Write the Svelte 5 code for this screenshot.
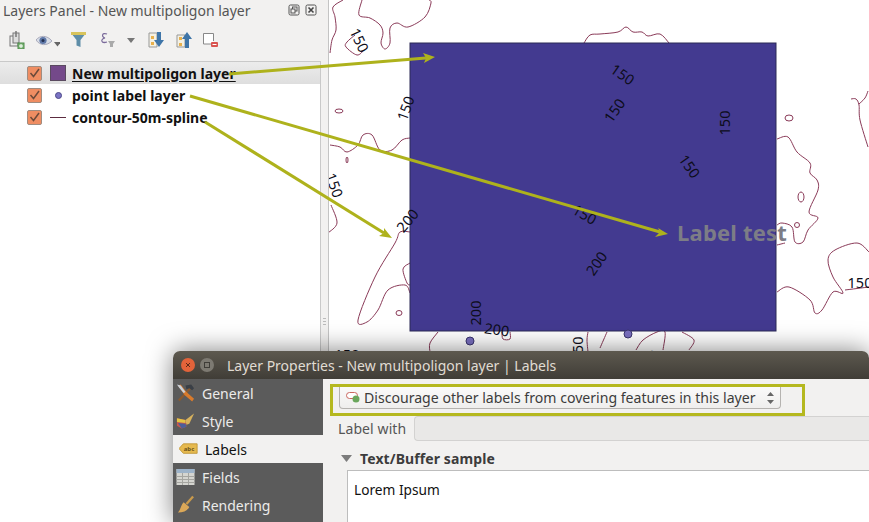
<script>
  // smooth line through the points (catmull-rom)
  function smooth(p) {
    let d = `M${p[0][0]} ${p[0][1]}`;
    for (let i = 0; i < p.length - 1; i++) {
      const a = p[i - 1] || p[i];
      const b = p[i];
      const c = p[i + 1];
      const e = p[i + 2] || c;
      d += `C${b[0] + (c[0] - a[0]) / 6} ${b[1] + (c[1] - a[1]) / 6} ${c[0] - (e[0] - b[0]) / 6} ${c[1] - (e[1] - b[1]) / 6} ${c[0]} ${c[1]}`;
    }
    return d;
  }

  const contours = [
    [[362,0],[359,15],[370,18],[380,25],[383,33],[381,43],[385,49],[390,43],[390,28],[397,23],[408,27],[425,17],[431,3],[429,0]],
    [[343,0],[333,7],[335,17],[336,30],[332,40],[330,53]],
    [[355,35],[347,42],[346,47],[357,55],[364,50]],
    [[330,145],[340,147],[347,152],[358,145],[363,135],[372,135],[380,150],[392,150],[402,140],[410,138]],
    [[584,43],[590,35],[600,34],[618,32],[626,27],[633,32],[642,32],[648,36],[660,34],[669,43]],
    [[777,139],[788,137],[797,152],[810,163],[810,173],[817,180],[818,190],[809,212],[818,218],[808,230],[803,242],[795,242],[792,227],[782,223],[777,225]],
    [[777,245],[785,243]],
    [[851,99],[856,99],[859,105],[860,120],[868,147]],
    [[859,104],[865,98],[868,91]],
    [[777,292],[789,287],[810,300],[815,313],[822,310],[833,292],[843,293],[833,277],[828,260],[835,250],[857,243],[869,252]],
    [[845,290],[869,287]],
    [[600,348],[607,332]],
    [[636,350],[643,340],[657,332],[665,332],[663,350]],
    [[682,332],[694,340],[689,350]],
    [[331,205],[337,223],[328,233]],
    [[410,232],[400,232],[395,243],[375,277],[358,320],[367,322],[378,310],[388,290],[405,285],[410,293]],
    [[410,263],[403,269],[407,283],[410,285]],
    [[438,332],[430,343],[430,352]],
    [[502,332],[503,339],[510,339],[510,332]],
    [[588,332],[587,340],[588,352]]
  ];

  const rings = [
    [339, 111, 4, 2], [347, 160, 1, 3], [789, 118, 4, 3], [801, 197, 3, 5], [797, 225, 2.5, 2.5], [399, 313, 3, 2.5]
  ];

  const labels = [
    ["150", 360, 40, 65], ["150", 405, 108, -70], ["150", 623, 74, 35], ["150", 614, 110, -55],
    ["150", 724, 123, -90], ["150", 690, 166, 55], ["150", 585, 214, 30], ["200", 596, 263, -55],
    ["200", 407, 220, -50], ["200", 475, 313, -90], ["200", 497, 329, 8], ["150", 335, 185, 70],
    ["150", 860, 282, 0], ["150", 577, 349, -90], ["200", 650, 362, -70], ["150", 347, 354, 0]
  ];

  const layers = [
    { name: "New multipoligon layer", kind: "fill", active: true },
    { name: "point label layer", kind: "point" },
    { name: "contour-50m-spline", kind: "line" }
  ];

  const menu = ["General", "Style", "Labels", "Fields", "Rendering"];
</script>

<div class="app">
  <aside class="panel">
    <header class="panel-title">
      <span>Layers Panel - New multipoligon layer</span>
      <div class="dock-btns">
        <svg width="12" height="12" viewBox="0 0 12 12"><rect x="1" y="1" width="10" height="10" rx="1.5" fill="none" stroke="#555"/><rect x="4.5" y="3" width="4.5" height="4" fill="none" stroke="#555"/><rect x="3" y="5" width="4" height="4" fill="#f2f1f0" stroke="#555"/></svg>
        <svg width="12" height="12" viewBox="0 0 12 12"><rect x="1" y="1" width="10" height="10" rx="1.5" fill="none" stroke="#555"/><path d="M3.5 3.5l5 5M8.5 3.5l-5 5" stroke="#444" stroke-width="1.6"/></svg>
      </div>
    </header>

    <div class="toolbar">
      <svg class="t1" width="16" height="18" viewBox="0 0 16 18"><rect x="1" y="5" width="8" height="10" fill="#eee" stroke="#777"/><rect x="4" y="2" width="6" height="10" fill="#ddd" stroke="#777"/><path d="M7 0v6" stroke="#777" stroke-width="1.5"/><rect x="9" y="12" width="6" height="6" fill="#7fb878" stroke="#4c8a4a"/><path d="M12 13v4M10 15h4" stroke="#fff"/></svg>
      <svg class="t2" width="24" height="14" viewBox="0 0 24 14"><path d="M0 6C4 1 11 1 16 7C11 12 4 12 0 6Z" fill="#d8dde6" stroke="#aab"/><circle cx="7" cy="6.5" r="3.6" fill="#5f78a8"/><circle cx="7" cy="6.5" r="1.5" fill="#23304f"/><path d="M18 8h7l-3.5 4.5z" fill="#666"/></svg>
      <svg class="t3" width="15" height="16" viewBox="0 0 15 16"><path d="M0 1h15L9.5 8v7l-4-1.5V8z" fill="#5f8ea8"/><rect width="15" height="3" fill="#d8c45c"/></svg>
      <svg class="t4" width="16" height="16" viewBox="0 0 16 16"><path d="M7 2C2 0 1 5 5 6C0 7 1 12 7 10" fill="none" stroke="#7a6a9a" stroke-width="1.2"/><path d="M8 9h7l-2 3v3h-3v-3z" fill="#aaa"/></svg>
      <svg class="t5" width="8" height="5" viewBox="0 0 8 5"><path d="M0 0h8L4 5z" fill="#777"/></svg>
      <svg class="t6" width="16" height="16" viewBox="0 0 16 16"><path d="M1 1h8v14H1z" fill="#f4f1e4" stroke="#999"/><rect x="3" y="4" width="3" height="3" fill="#e8b04c"/><rect x="3" y="10" width="3" height="3" fill="#e8b04c"/><path d="M9 0h4v8h3l-5 7-5-7h3z" fill="#3f75a8"/></svg>
      <svg class="t7" width="16" height="16" viewBox="0 0 16 16"><path d="M1 3h8v12H1z" fill="#f4f1e4" stroke="#999"/><rect x="3" y="5" width="3" height="3" fill="#e8b04c"/><rect x="3" y="11" width="3" height="3" fill="#e8b04c"/><path d="M9 16h4V7h3L11 0 6 7h3z" fill="#3f75a8"/></svg>
      <svg class="t8" width="15" height="14" viewBox="0 0 15 14"><path d="M8 11H.5V.5h10V8" fill="#fff" stroke="#888"/><rect x="8" y="9" width="7" height="5" rx="1" fill="#d9534f"/><path d="M9.5 11.5h4" stroke="#fff"/></svg>
    </div>

    <div class="tree">
      {#each layers as layer}
        <div class="row" class:active={layer.active}>
          <span class="check">
            <svg width="13" height="13" viewBox="0 0 13 13"><path d="M2.500 6l3 3.500 5.500-7.500" fill="none" stroke="#6b4a3a" stroke-width="1.5"/></svg>
          </span>
          <span class="sym">
            {#if layer.kind === "fill"}
              <i class="swatch"></i>
            {:else if layer.kind === "point"}
              <i class="dot"></i>
            {:else}
              <i class="dash"></i>
            {/if}
          </span>
          <span class="name">{layer.name}</span>
        </div>
      {/each}
    </div>
    <div class="grip"></div>
  </aside>

  <section class="map">
    <svg width="540" height="522" viewBox="329 0 540 522">
      {#each contours as c}
        <path d={smooth(c)} fill="none" stroke="#8a3a58" stroke-width="1"/>
      {/each}
      {#each rings as r}
        <ellipse cx={r[0]} cy={r[1]} rx={r[2]} ry={r[3]} fill="none" stroke="#8a3a58"/>
      {/each}
      <rect x="410" y="43" width="366" height="288" fill="#433a90" stroke="#2d2a57"/>
      <circle cx="470" cy="341" r="4" fill="#7a70c0" stroke="#3a3570"/>
      <circle cx="628" cy="334" r="4" fill="#7a70c0" stroke="#3a3570"/>
      {#each labels as l}
        <text class="lbl" text-anchor="middle" dominant-baseline="central" transform="translate({l[1]} {l[2]}) rotate({l[3]})">{l[0]}</text>
      {/each}
      <text class="test" x="677" y="241">Label test</text>
    </svg>
  </section>

  <svg class="arrows" width="869" height="522" viewBox="0 0 869 522">
    <g stroke="#aeb21c" stroke-width="3" fill="none">
      <path d="M229 74L426 58"/>
      <path d="M190 96L660 232"/>
      <path d="M205 122L384 233"/>
    </g>
    <g fill="#aeb21c">
      <path d="M435 57L423 53L426 58L424 63Z"/>
      <path d="M668 234L658 228L660 232L655 237Z"/>
      <path d="M392 238L384 228L384 233L379 236Z"/>
    </g>
  </svg>

  <div class="dialog">
    <header class="titlebar">
      <span class="wbtn close"><svg width="6" height="6" viewBox="0 0 6 6"><path d="M1 1l4 4M5 1l-4 4" stroke="#5b2a18" stroke-width="1"/></svg></span>
      <span class="wbtn min"><i></i></span>
      <span class="wtitle">Layer Properties - New multipoligon layer | Labels</span>
    </header>
    <div class="dbody">
      <nav class="side">
        {#each menu as m}
          <div class="item" class:sel={m === "Labels"}>
            {#if m === "General"}
              <svg width="20" height="20" viewBox="0 0 20 20"><path d="M3 18L15 5" stroke="#8a5a30" stroke-width="2.4"/><path d="M10 2l6-1 3 4-2 2-3-2-3 1z" fill="#3a3f46"/><path d="M2 2l3-1 6 8 8 7-2 3-8-7z" fill="#d97b2c"/><path d="M1 1l4 1 5 7-2 1-5-6z" fill="#c9d2dc"/></svg>
            {:else if m === "Style"}
              <svg width="20" height="20" viewBox="0 0 20 20"><path d="M1 7l9 2 1 7-5 2-5-3z" fill="#c9574c"/><path d="M1 7l9 2 0 3-9-1z" fill="#e2c544"/><path d="M2 12l8 1 1 3-5 2z" fill="#4c5f9a"/><path d="M10 9l9-7-5 11-3 1z" fill="#d8b25c"/></svg>
            {:else if m === "Labels"}
              <svg width="22" height="14" viewBox="0 0 22 14"><path d="M5 1h16v11H5L0 6.500z" fill="#e6b94e" stroke="#bf9434"/><text x="5.500" y="9.500" class="abc">abc</text></svg>
            {:else if m === "Fields"}
              <svg width="18" height="16" viewBox="0 0 18 16"><rect width="18" height="16" fill="#d5d5d0"/><rect width="18" height="4" fill="#9db3c9"/><path d="M0 7.500h18M0 10.500h18M0 13.500h18M6 4v12M12 4v12" stroke="#a5a5a0"/></svg>
            {:else}
              <svg width="20" height="20" viewBox="0 0 20 20"><path d="M11 9l7-8" stroke="#c99a4c" stroke-width="2.4"/><path d="M8 7l6 5c-2 4-6 6-12 6 3-3 3-8 6-11z" fill="#dba858"/></svg>
            {/if}
            <span>{m}</span>
          </div>
        {/each}
      </nav>
      <div class="content">
        <div class="mode-row">
          <div class="combo">
            <svg width="14" height="11" viewBox="0 0 14 11"><rect x=".5" y=".5" width="11" height="6" rx="3" fill="#fff" stroke="#c9675f"/><circle cx="10" cy="7" r="3.500" fill="#6aa65c"/></svg>
            <span class="combo-text">Discourage other labels from covering features in this layer</span>
            <svg class="updown" width="7" height="12" viewBox="0 0 7 12"><path d="M0 4L3.500 0L7 4zM0 8h7L3.500 12z" fill="#666"/></svg>
          </div>
        </div>
        <div class="label-with">
          <span>Label with</span>
          <div class="field"></div>
        </div>
        <div class="sample-head">
          <svg width="11" height="7" viewBox="0 0 11 7"><path d="M0 0h11L5.500 7z" fill="#7c7c7c"/></svg>
          <b>Text/Buffer sample</b>
        </div>
        <div class="sample">Lorem Ipsum</div>
      </div>
    </div>
  </div>
</div>

<style>
  :global(body) {
    margin: 0;
    background: #fff;
  }
  .app {
    position: relative;
    display: flex;
    width: 869px;
    height: 522px;
    overflow: hidden;
    font-family: "Noto Sans", "Open Sans", sans-serif;
  }

  .panel {
    position: relative;
    flex: 0 0 329px;
    display: flex;
    flex-direction: column;
    box-sizing: border-box;
    background: #f2f1f0;
    border-right: 1px solid #c4c4c4;
  }
  .panel-title {
    display: flex;
    justify-content: space-between;
    align-items: center;
    box-sizing: border-box;
    height: 22px;
    padding: 0 11px 2px 3px;
    font-size: 14px;
    color: #555;
  }
  .dock-btns {
    display: flex;
    gap: 5px;
  }
  .toolbar {
    position: relative;
    height: 39px;
  }
  .toolbar svg {
    position: absolute;
  }
  .t1 { left: 9px; top: 9px; }
  .t2 { left: 36px; top: 12px; }
  .t3 { left: 71px; top: 10px; }
  .t4 { left: 100px; top: 10px; }
  .t5 { left: 127px; top: 16px; }
  .t6 { left: 148px; top: 10px; }
  .t7 { left: 176px; top: 10px; }
  .t8 { left: 203px; top: 11px; }

  .tree {
    flex: 1;
    width: 321px;
    box-sizing: border-box;
    background: #fff;
    border-top: 1px solid #c9c9c9;
    border-right: 1px solid #c9c9c9;
  }
  .row {
    display: flex;
    align-items: center;
    height: 22px;
    padding-left: 27px;
  }
  .row.active {
    background: linear-gradient(#ececec, #dedede);
  }
  .check {
    display: block;
    width: 15px;
    height: 15px;
    box-sizing: border-box;
    background: #ef8d62;
    border: 1px solid #a08c80;
    border-radius: 2px;
    overflow: hidden;
  }
  .check svg {
    display: block;
  }
  .sym {
    display: flex;
    justify-content: center;
    align-items: center;
    width: 16px;
    margin: 0 6px 0 8px;
  }
  .swatch {
    width: 16px;
    height: 16px;
    box-sizing: border-box;
    background: #74498a;
    border: 1px solid #5a4a60;
  }
  .dot {
    width: 7px;
    height: 7px;
    box-sizing: border-box;
    border-radius: 50%;
    background: #7b74c4;
    border: 1px solid #4c4888;
  }
  .dash {
    width: 16px;
    height: 1px;
    background: #5c2c40;
  }
  .name {
    font-size: 14px;
    font-weight: 700;
    color: #111;
  }
  .row.active .name {
    text-decoration: underline;
    text-underline-offset: 2px;
  }
  .grip {
    position: absolute;
    left: 323px;
    top: 318px;
    width: 3px;
    height: 9px;
    background: repeating-linear-gradient(#bbb 0 1px, transparent 1px 3px);
  }

  .map {
    flex: 1;
    background: #fff;
  }
  .map svg {
    display: block;
  }
  .lbl {
    font-size: 14.500px;
    fill: #0d0d1a;
  }
  .test {
    font-size: 22px;
    font-weight: 700;
    letter-spacing: 0.2px;
    fill: #7d7d86;
  }
  .arrows {
    position: absolute;
    left: 0;
    top: 0;
  }

  .dialog {
    position: absolute;
    left: 173px;
    top: 351px;
    width: 696px;
    height: 171px;
    display: flex;
    flex-direction: column;
    border-radius: 7px 7px 0 0;
    overflow: hidden;
    box-shadow: 0 0 26px rgba(0, 0, 0, 0.5);
  }
  .titlebar {
    display: flex;
    align-items: center;
    flex: 0 0 28px;
    background: linear-gradient(#5d594f, #403d37);
    color: #e0dcd3;
    font-size: 14px;
    padding-left: 8px;
  }
  .wbtn {
    display: flex;
    justify-content: center;
    align-items: center;
    width: 14px;
    height: 14px;
    border-radius: 50%;
  }
  .close {
    background: #e2633a;
  }
  .min {
    margin-left: 5px;
    background: #7d7a72;
  }
  .min i {
    width: 6px;
    height: 6px;
    box-sizing: border-box;
    border: 1px solid #3f3d38;
  }
  .wtitle {
    margin-left: 13px;
  }
  .dbody {
    flex: 1;
    display: flex;
    min-height: 0;
  }
  .side {
    flex: 0 0 150px;
    background: #5b5b5b;
  }
  .item {
    display: flex;
    align-items: center;
    gap: 7px;
    height: 28px;
    padding-left: 3px;
    color: #ecebea;
    font-size: 14px;
  }
  .item svg {
    flex: 0 0 auto;
    width: 19px;
  }
  .item.sel {
    background: #f2f1f0;
    color: #111;
    padding-left: 6px;
  }
  .abc {
    font-size: 7px;
    font-weight: 700;
    fill: #6b5218;
  }
  .content {
    flex: 1;
    background: #f2f1f0;
    min-width: 0;
  }
  .mode-row {
    box-sizing: border-box;
    width: 475px;
    height: 32px;
    margin: 5px 0 0 7px;
    padding: 0 0 0 6px;
    border: 3px solid #b5b81f;
  }
  .combo {
    display: flex;
    align-items: center;
    box-sizing: border-box;
    width: 442px;
    height: 22px;
    padding: 0 6px;
    gap: 4px;
    background: linear-gradient(#fafafa, #efeeed);
    border: 1px solid #b5b3b0;
    border-top: 0;
    border-radius: 0 0 4px 4px;
    font-size: 14.100px;
    color: #3c3c3c;
  }
  .combo-text {
    flex: 1;
    white-space: nowrap;
  }
  .label-with {
    display: flex;
    align-items: center;
    box-sizing: border-box;
    height: 25px;
    padding-left: 15px;
    font-size: 14px;
    color: #555;
    letter-spacing: 0.1px;
  }
  .field {
    flex: 1;
    box-sizing: border-box;
    height: 25px;
    margin-left: 8px;
    background: #e9e8e7;
    border: 1px solid #d3d2d1;
    border-right: 0;
    border-radius: 4px 0 0 4px;
  }
  .sample-head {
    display: flex;
    align-items: center;
    gap: 8px;
    box-sizing: border-box;
    height: 29px;
    padding: 5px 0 0 18px;
    font-size: 14px;
    color: #3c3c3c;
    letter-spacing: 0.1px;
  }
  .sample {
    height: 60px;
    margin-left: 24px;
    padding: 9px 6px;
    box-sizing: border-box;
    background: #fff;
    border-top: 1px solid #bdbdbd;
    border-left: 1px solid #bdbdbd;
    font-size: 13.700px;
    color: #111;
  }
</style>
